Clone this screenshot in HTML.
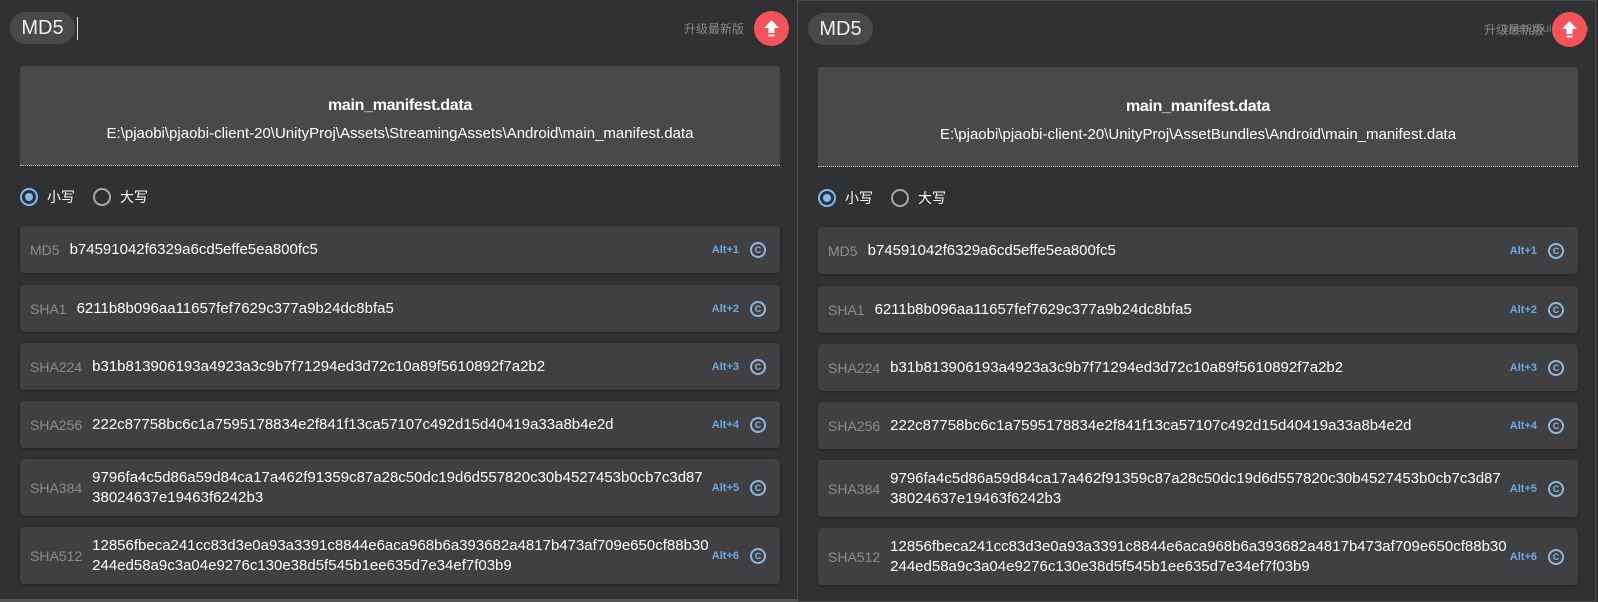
<!DOCTYPE html>
<html><head><meta charset="utf-8"><style>
*{box-sizing:border-box;margin:0;padding:0}
body{width:1598px;height:602px;background:#303133;font-family:"Segoe UI","Liberation Sans","Noto Sans CJK SC",sans-serif;color:#fff;overflow:hidden;position:relative}
.panel{position:absolute;top:0;height:602px}
.p1{left:0;width:797px}
.p2{left:797px;width:799px;border:1px solid #4a4b4d}
.pill{position:absolute;left:10px;top:12px;width:65px;height:32px;border-radius:16px;background:#48494b;font-size:20px;line-height:32px;text-align:center;color:#f0f0f0}
.cursor{position:absolute;left:77px;top:17px;width:1px;height:23px;background:#ddd}
.upg{position:absolute;top:20px;font-size:12px;color:#8a8a8a}
.btn{position:absolute;top:11px;width:35px;height:35px;border-radius:50%;background:#f5535a}
.btn svg{position:absolute;left:9px;top:8px}
.head{position:absolute;left:20px;width:760px;top:66px;height:100px;background:#48494b;border-radius:3px 3px 0 0;border-bottom:1px dotted #ccc;text-align:center}
.head .t{font-weight:bold;font-size:16px;margin-top:31px;letter-spacing:-0.3px}
.head .p{font-size:15px;margin-top:10px}
.radios{position:absolute;left:20px;top:187px;font-size:14px;display:flex;align-items:center}
.r{width:18px;height:18px;border-radius:50%;border:2px solid #aaa;margin-right:9px;position:relative}
.r.on{border-color:#7bbcf5}
.r.on::after{content:"";position:absolute;left:3px;top:3px;width:8px;height:8px;border-radius:50%;background:#7bbcf5}
.row{position:absolute;left:20px;width:760px;background:#404042;border-radius:4px;box-shadow:0 1px 2px #222;display:flex;align-items:center;padding-left:10px}
.row .l{color:#8d8d8d;font-size:14px;margin-right:10px}
.row .v{font-size:15px;line-height:20px;width:630px;word-break:break-all}
.row .a{position:absolute;right:41px;color:#6aaae6;font-size:11px;font-weight:bold}
.row .c{position:absolute;right:14px;width:16px;height:16px;border-radius:50%;border:2px solid #8fb8e0;color:#8fb8e0;font-size:9px;font-weight:bold;text-align:center;line-height:12px}
.bot{position:absolute;left:0;top:599px;width:797px;height:3px;background:#555}
</style></head><body>
<div class="panel p1">
<div class="pill">MD5</div><div class="cursor"></div>
<div class="upg" style="left:684px">升级最新版</div>
<div class="btn" style="left:754px"><svg width="17" height="19" viewBox="0 0 17 19"><path d="M8.5 1L16 9H11.5V14H5.5V9H1Z" fill="#fff"/><rect x="5.5" y="15.5" width="6" height="2" fill="#fff"/></svg></div>
<div class="head"><div class="t">main_manifest.data</div><div class="p">E:\pjaobi\pjaobi-client-20\UnityProj\Assets\StreamingAssets\Android\main_manifest.data</div></div>
<div class="radios"><div class="r on"></div>小写<div class="r" style="margin-left:18px"></div>大写</div>
<div class="row" style="top:226px;height:47px"><span class="l">MD5</span><span class="v">b74591042f6329a6cd5effe5ea800fc5</span><span class="a">Alt+1</span><span class="c">C</span></div>
<div class="row" style="top:285px;height:47px"><span class="l">SHA1</span><span class="v">6211b8b096aa11657fef7629c377a9b24dc8bfa5</span><span class="a">Alt+2</span><span class="c">C</span></div>
<div class="row" style="top:343px;height:47px"><span class="l">SHA224</span><span class="v">b31b813906193a4923a3c9b7f71294ed3d72c10a89f5610892f7a2b2</span><span class="a">Alt+3</span><span class="c">C</span></div>
<div class="row" style="top:401px;height:47px"><span class="l">SHA256</span><span class="v">222c87758bc6c1a7595178834e2f841f13ca57107c492d15d40419a33a8b4e2d</span><span class="a">Alt+4</span><span class="c">C</span></div>
<div class="row" style="top:459px;height:57px"><span class="l">SHA384</span><span class="v">9796fa4c5d86a59d84ca17a462f91359c87a28c50dc19d6d557820c30b4527453b0cb7c3d87<br>38024637e19463f6242b3</span><span class="a">Alt+5</span><span class="c">C</span></div>
<div class="row" style="top:527px;height:57px"><span class="l">SHA512</span><span class="v">12856fbeca241cc83d3e0a93a3391c8844e6aca968b6a393682a4817b473af709e650cf88b30<br>244ed58a9c3a04e9276c130e38d5f545b1ee635d7e34ef7f03b9</span><span class="a">Alt+6</span><span class="c">C</span></div>
<div class="bot"></div>
</div>
<div class="panel p2">
<div class="pill">MD5</div>
<div class="upg" style="left:686px">升级最新版</div>
<div class="upg" style="left:705px;opacity:.8">zhenghui equan</div>
<div class="btn" style="left:754px"><svg width="17" height="19" viewBox="0 0 17 19"><path d="M8.5 1L16 9H11.5V14H5.5V9H1Z" fill="#fff"/><rect x="5.5" y="15.5" width="6" height="2" fill="#fff"/></svg></div>
<div class="head"><div class="t">main_manifest.data</div><div class="p">E:\pjaobi\pjaobi-client-20\UnityProj\AssetBundles\Android\main_manifest.data</div></div>
<div class="radios"><div class="r on"></div>小写<div class="r" style="margin-left:18px"></div>大写</div>
<div class="row" style="top:226px;height:47px"><span class="l">MD5</span><span class="v">b74591042f6329a6cd5effe5ea800fc5</span><span class="a">Alt+1</span><span class="c">C</span></div>
<div class="row" style="top:285px;height:47px"><span class="l">SHA1</span><span class="v">6211b8b096aa11657fef7629c377a9b24dc8bfa5</span><span class="a">Alt+2</span><span class="c">C</span></div>
<div class="row" style="top:343px;height:47px"><span class="l">SHA224</span><span class="v">b31b813906193a4923a3c9b7f71294ed3d72c10a89f5610892f7a2b2</span><span class="a">Alt+3</span><span class="c">C</span></div>
<div class="row" style="top:401px;height:47px"><span class="l">SHA256</span><span class="v">222c87758bc6c1a7595178834e2f841f13ca57107c492d15d40419a33a8b4e2d</span><span class="a">Alt+4</span><span class="c">C</span></div>
<div class="row" style="top:459px;height:57px"><span class="l">SHA384</span><span class="v">9796fa4c5d86a59d84ca17a462f91359c87a28c50dc19d6d557820c30b4527453b0cb7c3d87<br>38024637e19463f6242b3</span><span class="a">Alt+5</span><span class="c">C</span></div>
<div class="row" style="top:527px;height:57px"><span class="l">SHA512</span><span class="v">12856fbeca241cc83d3e0a93a3391c8844e6aca968b6a393682a4817b473af709e650cf88b30<br>244ed58a9c3a04e9276c130e38d5f545b1ee635d7e34ef7f03b9</span><span class="a">Alt+6</span><span class="c">C</span></div>
</div>
</body></html>
